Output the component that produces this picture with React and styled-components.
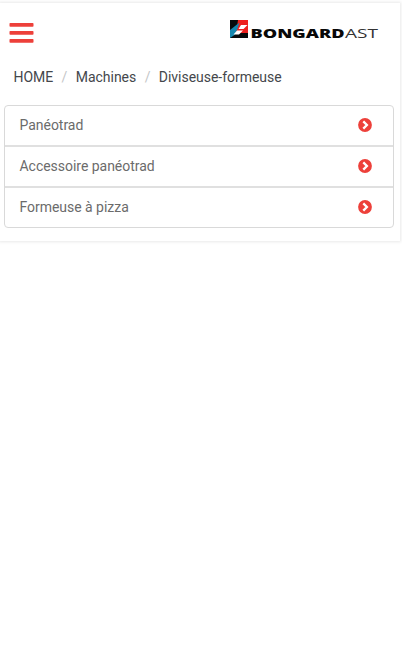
import React from 'react';
import styled, { createGlobalStyle } from 'styled-components';

const GlobalStyle = createGlobalStyle`
  * { box-sizing: border-box; }
  body { margin: 0; padding-top: 3px; min-height: 100vh; background: #fff; font-family: Roboto, "Liberation Sans", sans-serif; }
`;

const Page = styled.main`
  width: 400px;
  height: 238px;
  background: #fff;
  box-shadow: 0 0 3px 1px rgba(0, 0, 0, 0.09);
`;

const Header = styled.header`
  display: flex;
  justify-content: space-between;
  align-items: flex-start;
  height: 63px;
  padding: 17px 20px 0 9px;
`;

const MenuButton = styled.button`
  display: block;
  margin: 3px 0 0;
  padding: 0;
  border: 0;
  background: none;
  line-height: 0;
`;

const Logo = styled.a`
  display: block;
  line-height: 0;
`;

const Breadcrumb = styled.nav`
  display: flex;
  align-items: center;
  height: 22px;
  padding-left: 13.5px;
  font-size: 14px;
  line-height: 22px;
  letter-spacing: -0.03px;
  color: #44474b;
`;

const Separator = styled.span`
  width: 22.6px;
  text-align: center;
  color: #c4c6c8;
`;

const List = styled.ul`
  list-style: none;
  width: 390px;
  margin: 17px 0 0 4px;
  padding: 0;
  border: 1px solid #d9d9d9;
  border-radius: 4px;
`;

const Row = styled.li`
  display: flex;
  justify-content: space-between;
  align-items: center;
  height: 41px;
  padding: 0 21px 1px 14.5px;
  font-size: 14px;
  letter-spacing: -0.03px;
  color: #6b6b6b;
  & + & { border-top: 2px solid #e0e0e0; }
  &:first-child { height: 39px; }
`;

const Arrow = () => (
  <svg width="14" height="14" viewBox="0 0 14 14">
    <circle cx="7" cy="7" r="6.9" fill="#ed403a" />
    <path d="M5.3 3.4 8.9 7 5.3 10.6" fill="none" stroke="#fff" strokeWidth="2.3" />
  </svg>
);

export default function App() {
  return (
    <>
      <GlobalStyle />
      <Page>
        <Header>
          <MenuButton aria-label="Menu">
            <svg width="25" height="20" viewBox="0 0 25 20" fill="#ed403a">
              <rect x="0.5" y="0" width="24" height="3.8" rx="0.8" />
              <rect x="0.5" y="8" width="24" height="3.8" rx="0.8" />
              <rect x="0.5" y="16" width="24" height="3.8" rx="0.8" />
            </svg>
          </MenuButton>
          <Logo aria-label="Bongard AST">
            <svg width="150" height="24" viewBox="0 0 150 24">
              <rect width="18" height="18" fill="#080a0c" />
              <path d="M8 0h10v13H6z" fill="#ed201e" />
              <path d="M9.5 2.5 7 10 4.5 15 0 18V10z" fill="#1687af" />
              <path d="M11 5h6.5L13.5 9H8.5zM7 10.5h6L9 14.5H3.5z" fill="#fff" />
              <text x="20.5" y="17.6" fontFamily="Open Sans" fontWeight="800" fontSize="12.8" textLength="94" lengthAdjust="spacingAndGlyphs" fill="#080808">BONGARD</text>
              <text x="115" y="17.6" fontFamily="Open Sans" fontWeight="400" fontSize="12.5" textLength="33" lengthAdjust="spacingAndGlyphs" fill="#333">AST</text>
            </svg>
          </Logo>
        </Header>
        <Breadcrumb>
          <span>HOME</span>
          <Separator>/</Separator>
          <span>Machines</span>
          <Separator>/</Separator>
          <span>Diviseuse-formeuse</span>
        </Breadcrumb>
        <List>
          {['Panéotrad', 'Accessoire panéotrad', 'Formeuse à pizza'].map((label) => (
            <Row key={label}>
              <span>{label}</span>
              <Arrow />
            </Row>
          ))}
        </List>
      </Page>
    </>
  );
}
